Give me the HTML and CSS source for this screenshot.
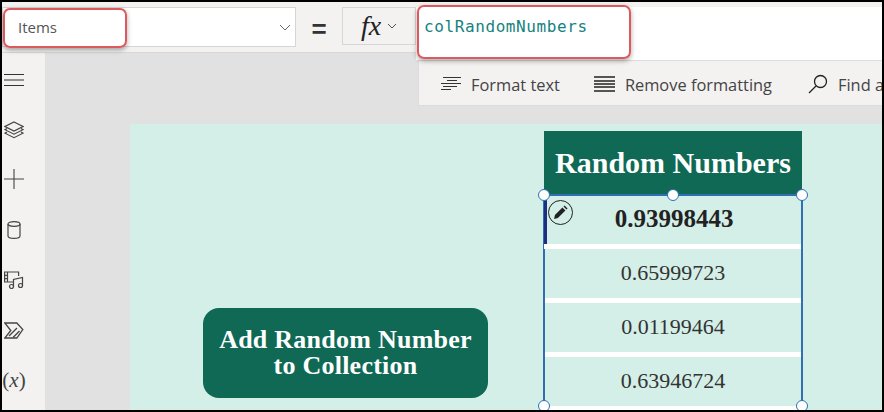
FILE: index.html
```html
<!DOCTYPE html>
<html lang="en">
<head>
    <meta charset="UTF-8">
    <title>Items - colRandomNumbers</title>
    <link rel="stylesheet" href="styles.css">
</head>
<body>
    <div class="frame">
        <div class="formula-bar">
            <div class="prop-select">
                <span class="prop-name">Items</span>
                <svg class="chev" width="12" height="7" viewBox="0 0 12 7"><path d="M1 1l5 5 5-5" fill="none" stroke="#666" stroke-width="1"/></svg>
            </div>
            <div class="equals">=</div>
            <div class="fx-btn">
                <span class="fx">fx</span>
                <svg width="10" height="6" viewBox="0 0 10 6"><path d="M1 1l4 4 4-4" fill="none" stroke="#555" stroke-width="1"/></svg>
            </div>
            <div class="formula-input">colRandomNumbers</div>
        </div>

        <div class="main">
            <div class="rail">
                <div class="rail-item"><svg width="20" height="12" viewBox="0 0 20 12"><path d="M0 .5h20M0 6h20M0 11.500h20" stroke="#333" stroke-width="1" fill="none"/></svg></div>
                <div class="rail-item"><svg width="20" height="18" viewBox="0 0 20 18"><g fill="none" stroke="#444" stroke-width="1.200"><path d="M10 1l9 4.500-9 4.500-9-4.500z"/><path d="M3 7.500l-2 1.200 9 4.500 9-4.500-2-1.200"/><path d="M3 11l-2 1.200 9 4.500 9-4.500-2-1.200"/></g></svg></div>
                <div class="rail-item"><svg class="rail-plus" width="20" height="20" viewBox="0 0 20 20"><path d="M10 0v20M0 10h20" stroke="#444" stroke-width="1.100" fill="none"/></svg></div>
                <div class="rail-item"><svg width="14" height="18" viewBox="0 0 14 18"><g fill="none" stroke="#444" stroke-width="1.200"><ellipse cx="7" cy="3" rx="6" ry="2.300"/><path d="M1 3v12c0 1.500 2.700 2.400 6 2.400s6-.9 6-2.400V3"/></g></svg></div>
                <div class="rail-item"><svg width="20" height="18" viewBox="0 0 20 18"><g fill="none" stroke="#444" stroke-width="1.200"><path d="M9 11H.6V1h14v4"/><path d="M3.500 1v10M.6 4.300h3M.6 7.600h3"/><path d="M9.500 16V8.500l9-2v8"/><circle cx="7.500" cy="15.500" r="2"/><circle cx="16.500" cy="14.500" r="2"/></g></svg></div>
                <div class="rail-item"><svg width="20" height="17" viewBox="0 0 20 17"><g fill="none" stroke="#444" stroke-width="1.300"><path d="M.8 1h12l6 6.500-6 8.500H.8l6-7.500z"/><path d="M5 14l8-8M9 15.500l6.500-6.500"/></g></svg></div>
                <div class="rail-item"><span class="var-icon">(<i>x</i>)</span></div>
            </div>

            <div class="workspace">
                <div class="canvas">
                    <button class="add-btn">Add Random Number<br>to Collection</button>
                    <div class="gallery-col">
                        <div class="gallery-title">Random Numbers</div>
                        <div class="gallery">
                            <div class="row row-first">0.93998443</div>
                            <div class="row">0.65999723</div>
                            <div class="row">0.01199464</div>
                            <div class="row">0.63946724</div>

                            <span class="handle h-tl"></span>
                            <span class="handle h-tc"></span>
                            <span class="handle h-tr"></span>
                            <span class="handle h-bl"></span>
                            <span class="handle h-br"></span>
                            <span class="edit-badge">
                                <svg width="15" height="15" viewBox="0 0 14 14"><path d="M1 13l.8-3.600 7-7 2.800 2.800-7 7zM9.800 1.400l1-1 2.800 2.800-1 1z" fill="#222"/></svg>
                            </span>
                        </div>
                    </div>
                </div>
            </div>
        </div>

        <!-- format menu hangs under the formula box -->
        <div class="format-menu">
            <div class="menu-item">
                <svg width="20" height="16" viewBox="0 0 20 16"><path d="M2 1.500h18M6 4.500h10M0 7.500h20M2 10.500h14M0 13.500h10" stroke="#333" stroke-width="1" fill="none"/></svg>
                Format text
            </div>
            <div class="menu-item">
                <svg width="21" height="16" viewBox="0 0 21 16"><path d="M0 1h21M0 5h21M0 8h21M0 11h21M0 15h21" stroke="#222" stroke-width="1.500" fill="none"/></svg>
                Remove formatting
            </div>
            <div class="menu-item menu-find">
                <svg width="20" height="20" viewBox="0 0 20 20"><g fill="none" stroke="#222" stroke-width="1.300"><circle cx="12.500" cy="7.500" r="6"/><path d="M8 12l-7 7"/></g></svg>
                Find and replace
            </div>
        </div>

        <div class="callout callout-items"></div>
        <div class="callout callout-formula"></div>
    </div>
</body>
</html>
```

FILE: styles.css
```css
html, body {
    margin: 0;
    padding: 0;
}
body {
    width: 884px;
    height: 412px;
    overflow: hidden;
    background: #000;
    font-family: "Open Sans", "Noto Sans", sans-serif;
}
.frame {
    position: relative;
    margin: 2px 2px 0 2px;
    width: 880px;
    height: 408px;
    overflow: hidden;
    display: flex;
    flex-direction: column;
    background: #f3f2f1;
}
.formula-bar {
    height: 51px;
    flex: none;
    box-sizing: border-box;
    padding-top: 5px;
    display: flex;
    align-items: flex-start;
    background: #f3f2f1;
    border-bottom: 1px solid #d8d8d8;
}
.prop-select {
    width: 294px;
    height: 40px;
    box-sizing: border-box;
    background: #fff;
    border: 1px solid #d6d6d6;
    display: flex;
    align-items: center;
    justify-content: space-between;
    padding: 0 4px 0 15px;
}
.prop-name {
    font-size: 15px;
    color: #555;
}
.equals {
    width: 46px;
    text-align: center;
    font-family: "Liberation Sans", sans-serif;
    font-size: 26px;
    font-weight: bold;
    line-height: 44px;
    color: #333;
}
.fx-btn {
    width: 74px;
    height: 38px;
    box-sizing: border-box;
    border: 1px solid #d6d6d6;
    display: flex;
    align-items: center;
    justify-content: center;
    gap: 6px;
}
.fx {
    font-family: "Liberation Serif", serif;
    font-style: italic;
    font-size: 28px;
    line-height: 36px;
    color: #222;
}
.formula-input {
    flex: 1;
    height: 53px;
    box-sizing: border-box;
    background: #fff;
    padding: 11px 0 0 8px;
    font-family: "DejaVu Sans Mono", monospace;
    font-size: 16px;
    letter-spacing: 0.6px;
    line-height: 18px;
    color: #14827f;
    position: relative;
    z-index: 1;
}
.main {
    flex: 1;
    display: flex;
    min-height: 0;
}
.rail {
    width: 43px;
    flex: none;
    box-sizing: border-box;
    padding: 2px 0 0 2px;
    background: #f3f2f1;
}
.rail-item {
    height: 50px;
    width: 20px;
    display: flex;
    align-items: center;
    justify-content: center;
}
.rail-plus {
    margin-bottom: 2px;
}
.var-icon {
    font-family: "Liberation Serif", serif;
    font-size: 21px;
    color: #444;
}
.workspace {
    flex: 1;
    background: #e1e1e1;
    padding: 71px 0 0 85px;
    min-width: 0;
}
.canvas {
    height: 100%;
    background: #d4efe7;
    display: flex;
    align-items: flex-start;
    padding: 7px 0 0 73px;
    box-sizing: border-box;
}
.add-btn {
    width: 285px;
    height: 90px;
    margin: 177px 56px 0 0;
    flex: none;
    border: 0;
    border-radius: 16px;
    background: #0f6955;
    color: #fff;
    font-family: "Liberation Serif", serif;
    font-weight: bold;
    font-size: 26px;
    letter-spacing: 0.25px;
    line-height: 26px;
    padding: 0;
}
.gallery-col {
    width: 258px;
    flex: none;
}
.gallery-title {
    height: 64px;
    background: #0f6955;
    color: #fff;
    font-family: "Liberation Serif", serif;
    font-weight: bold;
    font-size: 30px;
    line-height: 64px;
    text-align: center;
}
.gallery {
    position: relative;
    width: 260px;
    height: 212px;
    margin: -1px 0 0 -1px;
    border: solid #2f6fb3;
    border-width: 2px 2px 0 2px;
    box-sizing: border-box;
}
.row {
    height: 49px;
    margin-bottom: 5px;
    box-shadow: 0 5px 0 #fff;
    font-family: "Liberation Serif", serif;
    font-size: 22px;
    line-height: 48px;
    text-align: center;
    color: #333;
}
.row-first {
    height: 48px;
    margin-left: -1px;
    border-left: 3px solid #1c2f80;
    box-sizing: border-box;
    font-size: 25px;
    font-weight: bold;
    line-height: 46px;
    color: #222;
}
.handle {
    position: absolute;
    width: 10px;
    height: 10px;
    border: 1.500px solid #2f6fb3;
    border-radius: 50%;
    background: #fff;
}
.h-tl { left: -7px; top: -7px; }
.h-tc { left: 122px; top: -7px; }
.h-tr { right: -7px; top: -7px; }
.h-bl { left: -7px; bottom: -6px; }
.h-br { right: -7px; bottom: -6px; }
.edit-badge {
    position: absolute;
    left: 3px;
    top: 4px;
    width: 25px;
    height: 25px;
    box-sizing: border-box;
    border: 1.500px solid #222;
    border-radius: 50%;
    display: flex;
    align-items: center;
    justify-content: center;
}
.format-menu {
    position: absolute;
    left: 416px;
    top: 58px;
    width: 470px;
    height: 46px;
    box-sizing: border-box;
    display: flex;
    align-items: center;
    gap: 34px;
    padding: 2px 0 0 22px;
    background: #f3f2f1;
    border: 1px solid #dcdcdc;
    white-space: nowrap;
}
.menu-item {
    display: flex;
    align-items: center;
    gap: 10px;
    font-size: 16.400px;
    color: #444;
}
.menu-find {
    margin-left: 2px;
}
.callout {
    position: absolute;
    z-index: 2;
    box-sizing: border-box;
    border: 2px solid #dc5a5e;
    border-radius: 7px;
    box-shadow: 0 2px 5px rgba(0,0,0,0.35);
}
.callout-items {
    left: 1px;
    top: 6px;
    width: 124px;
    height: 40px;
}
.callout-formula {
    left: 415px;
    top: 3px;
    width: 214px;
    height: 54px;
}
```
